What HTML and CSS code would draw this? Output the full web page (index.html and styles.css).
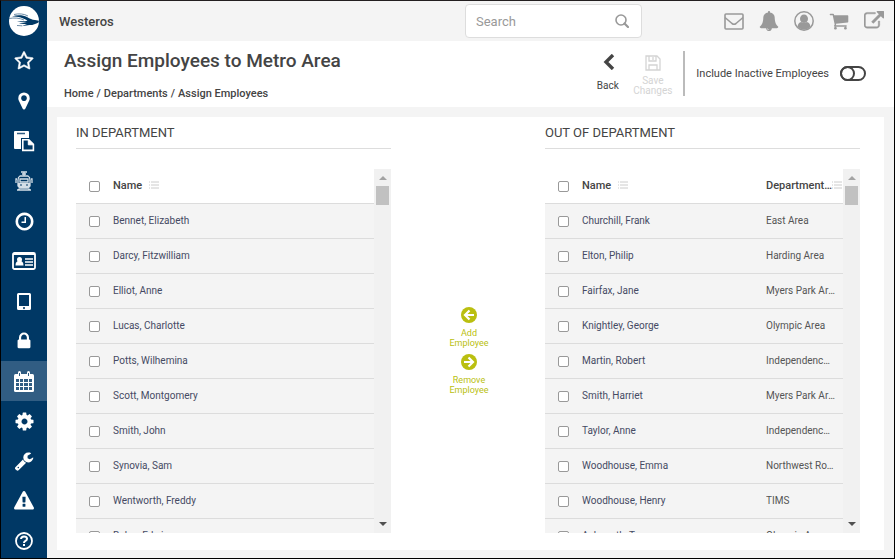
FILE: index.html
```html
<!DOCTYPE html>
<html lang="en">
<head>
    <meta charset="UTF-8">
    <meta name="viewport" content="width=device-width, initial-scale=1.0">
    <title>Assign Employees to Metro Area</title>
    <link rel="stylesheet" href="styles.css">
</head>
<body>

    <!-- Sidebar -->
    <nav class="sidebar">
        <a href="#" class="logo" aria-label="Home">
            <svg width="30" height="30" viewBox="0 0 30 30"><circle cx="15" cy="15" r="15" fill="#fff"/><path d="M3 10.500c5-1.800 11-1.500 15 .5 3 1.800 5 2.800 8 3l4 .8-.5 1.700c-3 1.600-6 2.800-9 2.600-2 0-4 .8-8 1.200l5.500-2.300c-3 .2-6-.2-8-1 3 0 6 0 8-.6-4 .2-8-.4-10-1.400 4 .5 8 .4 10.500-.2C15 12 9 10.500 3 10.500z" fill="#003865"/><path d="M0 12.500c5-1 11-.5 15 1.500M5 8.500c5-1.200 10-.7 14 1.500M8 19.500l5 .3" fill="none" stroke="#6f8ea8"/></svg>
        </a>
        <a href="#" aria-label="Favorites"><svg width="20" height="20" viewBox="0 0 1792 1792"><path d="M1201 1004l306-297-422-62-189-382-189 382-422 62 306 297-73 421 378-199 377 199zm527-357q0 22-26 48l-363 354 86 500q1 7 1 20 0 50-41 50-19 0-40-12l-449-236-449 236q-22 12-40 12-21 0-31.500-14.500t-10.500-35.500q0-6 2-20l86-500-364-354q-25-27-25-48 0-37 56-46l502-73 225-455q19-41 49-41t49 41l225 455 502 73q56 9 56 46z" stroke="#fff" stroke-width="50"/></svg></a>
        <a href="#" aria-label="Locations"><svg width="20" height="20" viewBox="0 0 1792 1792"><path d="M1152 640q0-106-75-181t-181-75-181 75-75 181 75 181 181 75 181-75 75-181zm256 0q0 109-33 179l-364 774q-16 33-47.500 52t-67.500 19-67.500-19-46.500-52l-365-774q-33-70-33-179 0-212 150-362t362-150 362 150 150 362z"/></svg></a>
        <a href="#" aria-label="Reports"><svg width="22" height="22" viewBox="0 0 22 22"><rect x="1" y="1" width="15" height="18" rx="1"/><path d="M4 3.500h8" stroke="#315d83" stroke-width="1.500"/><path d="M8 8h8l6 6v8H8z" fill="#003865"/><path d="M9.800 9.800h6l4.600 4.600v6H9.800z" fill="#003865" stroke="#fff" stroke-width="1.600"/><path d="M15.300 9.500v5.300h5.300z" stroke="#fff"/></svg></a>
        <a href="#" aria-label="Vehicles"><svg width="20" height="22" viewBox="0 0 20 22"><g fill="none" stroke="#d5dfe7" stroke-width="1.300"><path d="M7 2h6M8 4h4M10 2v4M6 6h8q2 1 2 4v6q-1 2-3 2H7q-2 0-3-2v-6q0-3 2-4zM3 9H2v4M17 9h1v4M6 18l-2 2M14 18l2 2M3 20h14"/><path d="M6 9h8v3H6z"/></g><path d="M4 13h12v3q-1 2-3 2H7q-2 0-3-2z" fill="#d5dfe7"/><path d="M6 15h2M12 15h2" stroke="#003865"/></svg></a>
        <a href="#" aria-label="Time"><svg width="21" height="21" viewBox="0 0 1792 1792"><path d="M1024 544v448q0 14-9 23t-23 9h-320q-14 0-23-9t-9-23v-64q0-14 9-23t23-9h224v-352q0-14 9-23t23-9h64q14 0 23 9t9 23zm416 352q0-148-73-273t-198-198-273-73-273 73-198 198-73 273 73 273 198 198 273 73 273-73 198-198 73-273zm224 0q0 209-103 385.500t-279.500 279.500-385.500 103-385.500-103-279.500-279.500-103-385.500 103-385.500 279.500-279.500 385.500-103 385.500 103 279.500 279.500 103 385.500z"/></svg></a>
        <a href="#" aria-label="Employees"><svg width="24" height="18" viewBox="0 0 24 18"><rect x="1" y="1" width="22" height="16" rx="1.500" fill="none" stroke="#fff" stroke-width="1.800"/><path d="M1 2h22" stroke="#fff" stroke-width="2"/><circle cx="7.500" cy="7.500" r="2.500"/><path d="M3.500 13.500q0-5 4-4.500 4-.5 4 4.500z"/><path d="M13 7h8M13 10h8M13 13h8" stroke="#fff" stroke-width="1.500"/></svg></a>
        <a href="#" aria-label="Tablets"><svg width="14" height="17" viewBox="0 0 14 17"><path fill-rule="evenodd" d="M1.500 0h11Q14 0 14 1.500v14q0 1.500-1.500 1.500h-11Q0 17 0 15.500v-14Q0 0 1.500 0zM2 2v11h10V2zm5 12a1 1 0 1 0 .01 0z"/></svg></a>
        <a href="#" aria-label="Security"><svg width="20" height="20" viewBox="0 0 1792 1792"><path d="M640 768h512v-192q0-106-75-181t-181-75-181 75-75 181v192zm832 96v576q0 40-28 68t-68 28h-960q-40 0-68-28t-28-68v-576q0-40 28-68t68-28h32v-192q0-184 132-316t316-132 316 132 132 316v192h32q40 0 68 28t28 68z"/></svg></a>
        <a href="#" class="active" aria-label="Calendar"><svg width="20" height="21" viewBox="0 0 20 21"><rect x="0" y="3" width="20" height="18" rx="1.500"/><rect x="4" y="0" width="3" height="6" rx="1.500"/><rect x="13" y="0" width="3" height="6" rx="1.500"/><path d="M5.500 2v3M14.500 2v3" stroke="#315d83"/><path d="M2 8h3v3H2zM6 8h3v3H6zM10 8h4v3h-4zM15 8h3v3h-3zM2 12h3v3H2zM6 12h3v3H6zM10 12h4v3h-4zM15 12h3v3h-3zM2 16h3v3H2zM6 16h3v3H6zM10 16h4v3h-4zM15 16h3v3h-3z" fill="#315d83"/></svg></a>
        <a href="#" aria-label="Settings"><svg width="21" height="21" viewBox="0 0 1792 1792"><path d="M1152 896q0-106-75-181t-181-75-181 75-75 181 75 181 181 75 181-75 75-181zm512-109v222q0 12-8 23t-20 13l-185 28q-19 54-39 91 35 50 107 138 10 12 10 25t-9 23q-27 37-99 108t-94 71q-12 0-26-9l-138-108q-44 23-91 38-16 136-29 186-7 28-36 28h-222q-14 0-24.500-8.500t-11.500-21.500l-28-184q-49-16-90-37l-141 107q-10 9-25 9-14 0-25-11-126-114-165-168-7-10-7-23 0-12 8-23 15-21 51-66.500t54-70.500q-27-50-41-99l-183-27q-13-2-21-12.500t-8-23.500v-222q0-12 8-23t19-13l186-28q14-46 39-92-40-57-107-138-10-12-10-24 0-10 9-23 26-36 98.500-107.500t94.500-71.500q13 0 26 10l138 107q44-23 91-38 16-136 29-186 7-28 36-28h222q14 0 24.500 8.500t11.500 21.500l28 184q49 16 90 37l142-107q9-9 24-9 13 0 25 10 129 119 165 170 7 8 7 22 0 12-8 23-15 21-51 66.500t-54 70.500q26 50 41 98l183 28q13 2 21 12.500t8 23.500z"/></svg></a>
        <a href="#" aria-label="Tools"><svg width="20" height="20" viewBox="0 0 1792 1792"><path d="M448 1472q0-26-19-45t-45-19-45 19-19 45 19 45 45 19 45-19 19-45zm644-420l-682 682q-37 37-90 37-52 0-91-37l-106-108q-38-36-38-90 0-53 38-91l681-681q39 98 114.500 173.500t173.500 114.500zm634-435q0 39-23 106-47 134-164.500 217.500t-258.500 83.500q-185 0-316.500-131.500t-131.500-316.500 131.500-316.500 316.500-131.500q58 0 121.500 16.500t107.500 46.500q16 11 16 28t-16 28l-293 169v224l193 107q5-3 79-48.500t135.500-81 70.500-35.500q15 0 23.500 10t8.500 25z"/></svg></a>
        <a href="#" aria-label="Alerts"><svg width="20" height="20" viewBox="0 0 1792 1792"><path d="M1024 1375v-190q0-14-9.500-23.500t-22.500-9.500h-192q-13 0-22.500 9.500t-9.500 23.500v190q0 14 9.500 23.500t22.500 9.500h192q13 0 22.500-9.500t9.500-23.500zm-2-374l18-459q0-12-10-19-13-11-24-11h-220q-11 0-24 11-10 7-10 21l17 457q0 10 10 16.500t24 6.500h185q14 0 23.500-6.500t10.500-16.500zm-14-934l768 1408q35 63-2 126-17 29-46.500 46t-63.500 17h-1536q-34 0-63.500-17t-46.500-46q-37-63-2-126l768-1408q17-31 47-49t65-18 65 18 47 49z"/></svg></a>
        <a href="#" aria-label="Help"><svg width="18" height="18" viewBox="0 0 18 18"><circle cx="9" cy="9" r="8" fill="none" stroke="#fff" stroke-width="1.800"/><path d="M6 7q.2-2.600 3-2.600t3 2.300q0 1.300-1.500 2.100T9 11" fill="none" stroke="#fff" stroke-width="2"/><rect x="8" y="12" width="2" height="2"/></svg></a>
    </nav>

    <div class="page">
        <!-- Top Bar -->
        <header class="topbar">
            <div class="site-name">Westeros</div>
            <div class="search-box">
                <input type="text" placeholder="Search" aria-label="Search">
                <svg width="14" height="14" viewBox="0 0 14 14"><circle cx="6" cy="6" r="5" fill="none" stroke="#999" stroke-width="1.600"/><path d="M9.500 9.500l3.500 3.500" stroke="#999" stroke-width="2.200" stroke-linecap="round"/></svg>
            </div>
            <div class="top-icons">
                <a href="#" aria-label="Messages"><svg width="20" height="17" viewBox="0 0 20 17"><rect x="1" y="1" width="18" height="15" rx="1" fill="none" stroke="#999" stroke-width="1.600"/><path d="M1 4.500l7 6q2 1.500 4 0l7-6" fill="none" stroke="#999" stroke-width="1.600"/></svg></a>
                <a href="#" aria-label="Notifications"><svg width="20" height="20" viewBox="0 0 1792 1792"><path d="M912 1696q0-16-16-16-59 0-101.500-42.500t-42.500-101.500q0-16-16-16t-16 16q0 73 51.500 124.500t124.500 51.500q16 0 16-16zm816-288q0 52-38 90t-90 38h-448q0 106-75 181t-181 75-181-75-75-181h-448q-52 0-90-38t-38-90q50-42 91-88t85-119.500 74.500-158.500 50-206 19.500-260q0-152 117-282.500t307-158.500q-8-19-8-39 0-40 28-68t68-28 68 28 28 68q0 20-8 39 190 28 307 158.500t117 282.500q0 139 19.500 260t50 206 74.500 158.500 85 119.500 91 88z"/></svg></a>
                <a href="#" aria-label="Account"><svg width="20" height="20" viewBox="0 0 20 20"><circle cx="10" cy="10" r="9.200" fill="none" stroke="#999" stroke-width="1.500"/><ellipse cx="10" cy="7.800" rx="4" ry="4.300"/><path d="M3.500 16q.5-4.500 3.700-5 2.800 2 5.600 0 3.200.5 3.700 5-6.500 5.500-13 0z"/></svg></a>
                <a href="#" aria-label="Cart"><svg width="20" height="20" viewBox="0 0 1792 1792"><path d="M704 1536q0 52-38 90t-90 38-90-38-38-90 38-90 90-38 90 38 38 90zm896 0q0 52-38 90t-90 38-90-38-38-90 38-90 90-38 90 38 38 90zm128-1088v512q0 24-16.500 42.500t-40.500 21.500l-1044 122q13 60 13 70 0 16-24 64h920q26 0 45 19t19 45-19 45-45 19h-1024q-26 0-45-19t-19-45q0-11 8-31.500t16-36 21.500-40 15.500-29.500l-177-823h-204q-26 0-45-19t-19-45 19-45 45-19h256q16 0 28.500 6.500t19.500 15.500 13 24.500 8 26 5.500 29.500 4.500 26h1201q26 0 45 19t19 45z"/></svg></a>
                <a href="#" aria-label="Open in new window"><svg width="20" height="20" viewBox="0 0 1792 1792"><path d="M1408 928v320q0 119-84.500 203.500t-203.500 84.500h-832q-119 0-203.500-84.500t-84.500-203.500v-832q0-119 84.500-203.500t203.500-84.500h704q14 0 23 9t9 23v64q0 14-9 23t-23 9h-704q-66 0-113 47t-47 113v832q0 66 47 113t113 47h832q66 0 113-47t47-113v-320q0-14 9-23t23-9h64q14 0 23 9t9 23zm384-864v512q0 26-19 45t-45 19-45-19l-176-176-652 652q-10 10-23 10t-23-10l-114-114q-10-10-10-23t10-23l652-652-176-176q-19-19-19-45t19-45 45-19h512q26 0 45 19t19 45z" stroke="#999" stroke-width="40"/></svg></a>
            </div>
        </header>

        <!-- Page Title and Actions -->
        <div class="title-bar">
            <div class="title">
                <h1>Assign Employees to Metro Area</h1>
                <div class="breadcrumb">
                    <a href="#">Home</a><span>/</span><a href="#">Departments</a><span>/</span><a href="#">Assign Employees</a>
                </div>
            </div>
            <div class="actions">
                <button class="action back">
                    <svg width="20" height="16" viewBox="0 0 20 16"><path d="M15 1L8 8l7 7" fill="none" stroke="#444" stroke-width="3.400"/></svg>
                    <span>Back</span>
                </button>
                <button class="action save" disabled>
                    <svg width="16" height="16" viewBox="0 0 16 16"><path d="M1 1h11l3 3v11H1zM4 15v-5h8v5M4 1v5h7V1M8 2v3" fill="none" stroke="#d4d4d4" stroke-width="1.300"/></svg>
                    <span>Save Changes</span>
                </button>
                <div class="toggle">
                    <label for="inactive">Include Inactive Employees</label>
                    <input type="checkbox" id="inactive" class="switch">
                </div>
            </div>
        </div>

        <!-- Employee Lists -->
        <main class="content">
            <section class="list">
                <h2>IN DEPARTMENT</h2>
                <div class="grid">
                    <div class="grid-rows">
                        <table>
                            <thead>
                                <tr><th class="check"><input type="checkbox" aria-label="Select all"></th><th>Name <svg class="filter" width="10" height="8" viewBox="0 0 10 8"><path d="M0 1h1M2 1h8M0 4h1M2 4h8M0 7h1M2 7h8" stroke="#ccc"/></svg></th></tr>
                            </thead>
                            <tbody>
                                <tr><td class="check"><input type="checkbox" id="in1"></td><td><label for="in1">Bennet, Elizabeth</label></td></tr>
                                <tr><td class="check"><input type="checkbox" id="in2"></td><td><label for="in2">Darcy, Fitzwilliam</label></td></tr>
                                <tr><td class="check"><input type="checkbox" id="in3"></td><td><label for="in3">Elliot, Anne</label></td></tr>
                                <tr><td class="check"><input type="checkbox" id="in4"></td><td><label for="in4">Lucas, Charlotte</label></td></tr>
                                <tr><td class="check"><input type="checkbox" id="in5"></td><td><label for="in5">Potts, Wilhemina</label></td></tr>
                                <tr><td class="check"><input type="checkbox" id="in6"></td><td><label for="in6">Scott, Montgomery</label></td></tr>
                                <tr><td class="check"><input type="checkbox" id="in7"></td><td><label for="in7">Smith, John</label></td></tr>
                                <tr><td class="check"><input type="checkbox" id="in8"></td><td><label for="in8">Synovia, Sam</label></td></tr>
                                <tr><td class="check"><input type="checkbox" id="in9"></td><td><label for="in9">Wentworth, Freddy</label></td></tr>
                                <tr><td class="check"><input type="checkbox" id="in10"></td><td><label for="in10">Baker, Edwin</label></td></tr>
                            </tbody>
                        </table>
                    </div>
                    <div class="scrollbar"><i class="up"></i><i class="thumb"></i><i class="down"></i></div>
                </div>
            </section>

            <div class="move">
                <button>
                    <svg width="16" height="16" viewBox="0 0 16 16"><circle cx="8" cy="8" r="8"/><path d="M13 8H4.500M8.500 3.500L4 8l4.500 4.500" fill="none" stroke="#fff" stroke-width="2.200"/></svg>
                    <span>Add Employee</span>
                </button>
                <button>
                    <svg width="16" height="16" viewBox="0 0 16 16"><circle cx="8" cy="8" r="8"/><path d="M3 8h8.500M7.500 3.500L12 8l-4.500 4.500" fill="none" stroke="#fff" stroke-width="2.200"/></svg>
                    <span>Remove Employee</span>
                </button>
            </div>

            <section class="list">
                <h2>OUT OF DEPARTMENT</h2>
                <div class="grid">
                    <div class="grid-rows">
                        <table>
                            <thead>
                                <tr><th class="check"><input type="checkbox" aria-label="Select all"></th><th>Name <svg class="filter" width="10" height="8" viewBox="0 0 10 8"><path d="M0 1h1M2 1h8M0 4h1M2 4h8M0 7h1M2 7h8" stroke="#ccc"/></svg></th><th class="dept"><div class="dept-head"><span>Department…</span><svg width="10" height="8" viewBox="0 0 10 8"><path d="M0 1h1M2 1h8M0 4h1M2 4h8M0 7h1M2 7h8" stroke="#ccc"/></svg></div></th></tr>
                            </thead>
                            <tbody>
                                <tr><td class="check"><input type="checkbox" id="out1"></td><td><label for="out1">Churchill, Frank</label></td><td class="dept">East Area</td></tr>
                                <tr><td class="check"><input type="checkbox" id="out2"></td><td><label for="out2">Elton, Philip</label></td><td class="dept">Harding Area</td></tr>
                                <tr><td class="check"><input type="checkbox" id="out3"></td><td><label for="out3">Fairfax, Jane</label></td><td class="dept">Myers Park Area</td></tr>
                                <tr><td class="check"><input type="checkbox" id="out4"></td><td><label for="out4">Knightley, George</label></td><td class="dept">Olympic Area</td></tr>
                                <tr><td class="check"><input type="checkbox" id="out5"></td><td><label for="out5">Martin, Robert</label></td><td class="dept">Independence Area</td></tr>
                                <tr><td class="check"><input type="checkbox" id="out6"></td><td><label for="out6">Smith, Harriet</label></td><td class="dept">Myers Park Area</td></tr>
                                <tr><td class="check"><input type="checkbox" id="out7"></td><td><label for="out7">Taylor, Anne</label></td><td class="dept">Independence Area</td></tr>
                                <tr><td class="check"><input type="checkbox" id="out8"></td><td><label for="out8">Woodhouse, Emma</label></td><td class="dept">Northwest Routes</td></tr>
                                <tr><td class="check"><input type="checkbox" id="out9"></td><td><label for="out9">Woodhouse, Henry</label></td><td class="dept">TIMS</td></tr>
                                <tr><td class="check"><input type="checkbox" id="out10"></td><td><label for="out10">Ashworth, Tom</label></td><td class="dept">Olympic Area</td></tr>
                            </tbody>
                        </table>
                    </div>
                    <div class="scrollbar"><i class="up"></i><i class="thumb"></i><i class="down"></i></div>
                </div>
            </section>
        </main>
    </div>

</body>
</html>
```
FILE: styles.css
```css
*,
*::before {
    box-sizing: border-box;
    margin: 0;
    padding: 0;
}

body {
    display: flex;
    height: 100vh;
    overflow: hidden;
    border: 1px solid #000;
    border-top-color: #231f20;
    background: #f4f4f4;
    color: #444;
    font-family: Roboto, "Liberation Sans", sans-serif;
    font-size: 10px;
}

a {
    color: inherit;
    text-decoration: none;
}

button,
input {
    font-family: inherit;
}

button {
    border: none;
    background: none;
    cursor: pointer;
}

/* Sidebar */
.sidebar {
    flex: none;
    width: 46px;
    overflow: hidden;
    background: #003865;
}

.sidebar a {
    display: flex;
    align-items: center;
    justify-content: center;
    height: 40px;
    fill: #fff;
}

.sidebar .active {
    background: #315d83;
}

.page {
    flex: 1;
    min-width: 0;
    display: flex;
    flex-direction: column;
}

/* Top Bar */
.topbar {
    flex: none;
    display: flex;
    align-items: center;
    height: 40px;
    padding: 0 10px 0 12px;
}

.site-name {
    flex: 1;
    font-size: 13px;
    font-weight: 500;
}

.search-box {
    display: flex;
    align-items: center;
    width: 177px;
    height: 34px;
    margin-right: 82px;
    padding: 0 12px 0 10px;
    background: #fff;
    border: 1px solid #ddd;
    border-radius: 4px;
}

.search-box input {
    flex: 1;
    min-width: 0;
    border: none;
    outline: none;
    background: none;
    font-size: 13px;
}

.search-box input::placeholder {
    color: #999;
}

.top-icons {
    display: flex;
    align-items: center;
    gap: 15px;
    fill: #999;
}

.top-icons svg {
    display: block;
}

/* Title and Actions */
.title-bar {
    flex: none;
    display: flex;
    justify-content: space-between;
    height: 66px;
    padding: 10px 28px 0 17px;
    background: #fff;
}

h1 {
    font-size: 19px;
    line-height: 20px;
    font-weight: 500;
}

.breadcrumb {
    display: flex;
    gap: 3px;
    margin-top: 15px;
    font-size: 11px;
    line-height: 16px;
    font-weight: 500;
}

.actions {
    display: flex;
}

.action {
    display: flex;
    flex-direction: column;
    align-items: center;
    width: 45px;
    font-size: 10px;
    line-height: 10px;
    color: #444;
}

.back {
    gap: 11px;
    padding-top: 3px;
}

.save {
    gap: 5px;
    padding-top: 4px;
    color: #d4d4d4;
}

.toggle {
    display: flex;
    align-items: center;
    gap: 11px;
    height: 45px;
    margin-left: 8px;
    padding-left: 11px;
    border-left: 2px solid #bbb;
    font-size: 11px;
}

.switch {
    appearance: none;
    width: 26px;
    height: 15px;
    border: 2px solid #444;
    border-radius: 8px;
}

.switch::before {
    content: "";
    display: block;
    width: 15px;
    height: 15px;
    margin: -2px;
    border: 2px solid #444;
    border-radius: 50%;
}

/* Lists */
.content {
    flex: 1;
    min-height: 0;
    display: flex;
    margin: 10px 10px 8px;
    padding: 0 24px 17px 19px;
    background: #fff;
}

.list {
    flex: 1;
    min-width: 0;
    display: flex;
    flex-direction: column;
}

h2 {
    flex: none;
    height: 32px;
    margin-bottom: 20px;
    border-bottom: 1px solid #ddd;
    font-size: 13px;
    line-height: 31px;
    font-weight: 400;
}

.grid {
    flex: 1;
    min-height: 0;
    display: flex;
}

.grid-rows {
    flex: 1;
    min-width: 0;
    overflow: hidden;
}

table {
    width: 100%;
    table-layout: fixed;
    border-collapse: separate;
    border-spacing: 0;
}

th,
td {
    height: 35px;
    padding-bottom: 2px;
    border-bottom: 1px solid #dcdcdc;
    text-align: left;
    vertical-align: middle;
    white-space: nowrap;
}

th {
    font-size: 11px;
    font-weight: 500;
}

td {
    background: #f4f4f4;
    color: #555;
}

td label {
    color: #454a63;
}

.check {
    width: 37px;
    padding: 1px 0 0 13px;
}

.check input {
    appearance: none;
    display: block;
    width: 11px;
    height: 11px;
    border: 1px solid #999;
    border-radius: 2px;
    background: #fff;
}

.filter {
    margin-left: 4px;
}

.dept {
    width: 77px;
    padding-right: 8px;
    overflow: hidden;
    text-overflow: ellipsis;
}

th.dept {
    padding-right: 1px;
}

.dept-head {
    display: flex;
    align-items: center;
    justify-content: space-between;
}

.dept-head svg {
    flex: none;
    margin-left: -4px;
}

/* Scrollbar */
.scrollbar {
    flex: none;
    display: flex;
    flex-direction: column;
    align-items: center;
    width: 17px;
    padding: 7px 0;
    background: #f1f1f1;
}

.up {
    border: 4px solid transparent;
    border-top: none;
    border-bottom-color: #a3a3a3;
}

.thumb {
    width: 13px;
    height: 19px;
    margin-top: 6px;
    background: #c1c1c1;
}

.down {
    margin-top: auto;
    border: 4px solid transparent;
    border-bottom: none;
    border-top-color: #505050;
}

/* Add and Remove */
.move {
    flex: none;
    display: flex;
    flex-direction: column;
    align-items: center;
    justify-content: center;
    gap: 6px;
    width: 154px;
    padding: 52px 0 0 2px;
}

.move button {
    display: flex;
    flex-direction: column;
    align-items: center;
    gap: 5px;
    width: 50px;
    font-size: 9px;
    line-height: 10px;
    color: #babf10;
    fill: #babf10;
}
```
